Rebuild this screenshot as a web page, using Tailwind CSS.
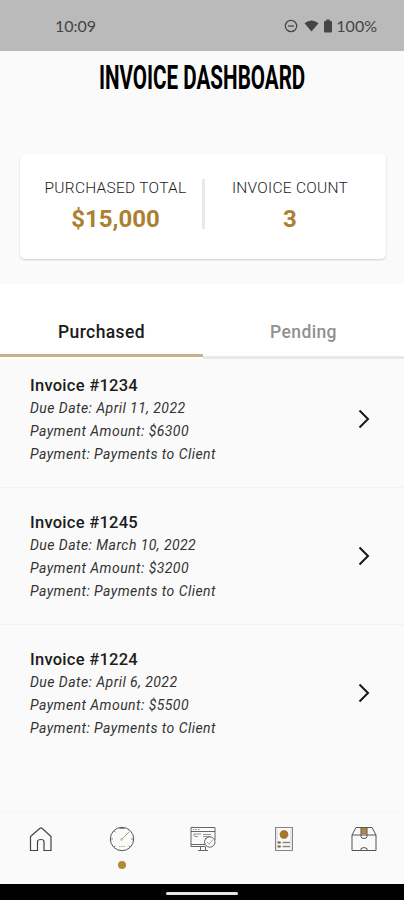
<!DOCTYPE html>
<html lang="en">
  <head>
    <meta charset="UTF-8" />
    <meta name="viewport" content="width=device-width, initial-scale=1.0" />
    <title>Invoice Dashboard</title>
    <script src="https://cdn.jsdelivr.net/npm/@tailwindcss/browser@4"></script>
  </head>
  <body class="flex h-[900px] w-[404px] flex-col overflow-hidden bg-[#fafafa] font-[Roboto,sans-serif] text-[#1c1c1c]">
    <!-- Status bar -->
    <div class="flex h-[51px] shrink-0 items-center bg-[#bababa] pr-[27px] pl-[55px] text-[#454545]">
      <span class="font-[Lato,sans-serif] text-[16px] leading-5">10:09</span>
      <svg class="ml-auto h-[14px] w-[14px]" viewBox="0 0 14 14" fill="none" stroke="currentColor" stroke-width="1.2">
        <circle cx="7" cy="7" r="5.7" />
        <path d="M4 7h6" />
      </svg>
      <svg class="ml-[6px] h-[12px] w-[15px]" viewBox="0 0 15 12" fill="currentColor">
        <path d="M0.5 3.2Q7.5-2 14.5 3.2L7.5 11.6Z" />
      </svg>
      <svg class="ml-[5px] h-[14px] w-[8px]" viewBox="0 0 8 14" fill="currentColor">
        <path d="M2.3 0.5h3.4v1.5H7a1 1 0 0 1 1 1V12.5a1 1 0 0 1-1 1H1a1 1 0 0 1-1-1V3a1 1 0 0 1 1-1h1.3z" />
      </svg>
      <span class="ml-[4px] font-[Lato,sans-serif] text-[16px] leading-5">100%</span>
    </div>

    <!-- Title and totals -->
    <header class="h-[233px] shrink-0 px-5 pt-[8px]">
      <h1 class="flex h-[36px] justify-center">
        <span class="shrink-0 scale-x-[0.625] text-[33px] leading-[37px] font-bold whitespace-nowrap text-black">INVOICE DASHBOARD</span>
      </h1>
      <div class="mt-[59px] flex h-[105px] w-[366px] rounded-[5px] bg-white pt-[25px] shadow-[0_1px_2px_rgba(0,0,0,0.18)]">
        <div class="flex w-[182px] flex-col items-center pl-[9px]">
          <span class="text-[15.5px] leading-[18px] font-light tracking-[0.27px] whitespace-nowrap">PURCHASED TOTAL</span>
          <span class="mt-[8px] text-[24px] leading-[28px] font-bold text-[#ac7f31]">$15,000</span>
        </div>
        <div class="h-[50px] w-[3px] bg-[#e9e9e9]"></div>
        <div class="flex flex-1 flex-col items-center pr-[11px]">
          <span class="text-[15.5px] leading-[18px] font-light tracking-[0.27px] whitespace-nowrap">INVOICE COUNT</span>
          <span class="mt-[8px] text-[24px] leading-[28px] font-bold text-[#ac7f31]">3</span>
        </div>
      </div>
    </header>

    <!-- Tabs -->
    <nav class="flex h-[75px] shrink-0 bg-white text-center text-[17.5px] leading-5 font-medium tracking-[0.38px]">
      <div class="h-[73px] w-[203px] border-b-3 border-[#cbb08a] pt-[38px]">Purchased</div>
      <div class="flex-1 border-b-3 border-[#e8e8e8] pt-[38px] text-[#909090]">Pending</div>
    </nav>

    <!-- Invoices -->
    <main class="h-[453px] shrink-0">
      <div class="flex h-[129px] justify-between border-b border-[#f2f2f2] pr-[34px] pl-[30px]">
        <div class="pt-[16px] text-[14px] leading-[23px] tracking-[0.45px] text-[#333] italic">
          <h2 class="text-[16.5px] leading-[22px] font-medium tracking-[0.27px] text-[#1c1c1c] not-italic">Invoice #1234</h2>
          <p>Due Date: April 11, 2022</p>
          <p>Payment Amount: $6300</p>
          <p>Payment: Payments to Client</p>
        </div>
        <svg class="mt-[50px] h-[20px] w-[12px]" viewBox="0 0 12 20" fill="none" stroke="#181818" stroke-width="2"><path d="M1.5 1.5L10 10L1.5 18.5" /></svg>
      </div>
      <div class="flex h-[137px] justify-between border-b border-[#f2f2f2] pr-[34px] pl-[30px]">
        <div class="pt-[24px] text-[14px] leading-[23px] tracking-[0.45px] text-[#333] italic">
          <h2 class="text-[16.5px] leading-[22px] font-medium tracking-[0.27px] text-[#1c1c1c] not-italic">Invoice #1245</h2>
          <p>Due Date: March 10, 2022</p>
          <p>Payment Amount: $3200</p>
          <p>Payment: Payments to Client</p>
        </div>
        <svg class="mt-[58px] h-[20px] w-[12px]" viewBox="0 0 12 20" fill="none" stroke="#181818" stroke-width="2"><path d="M1.5 1.5L10 10L1.5 18.5" /></svg>
      </div>
      <div class="flex h-[137px] justify-between pr-[34px] pl-[30px]">
        <div class="pt-[24px] text-[14px] leading-[23px] tracking-[0.45px] text-[#333] italic">
          <h2 class="text-[16.5px] leading-[22px] font-medium tracking-[0.27px] text-[#1c1c1c] not-italic">Invoice #1224</h2>
          <p>Due Date: April 6, 2022</p>
          <p>Payment Amount: $5500</p>
          <p>Payment: Payments to Client</p>
        </div>
        <svg class="mt-[58px] h-[20px] w-[12px]" viewBox="0 0 12 20" fill="none" stroke="#181818" stroke-width="2"><path d="M1.5 1.5L10 10L1.5 18.5" /></svg>
      </div>
    </main>

    <!-- Bottom navigation -->
    <footer class="grid h-[72px] shrink-0 grid-cols-5 justify-items-center border-t border-[#f6f6f6] pt-[13px] pl-px text-[#555]">
      <svg class="h-[26px] w-[26px]" viewBox="0 0 26 26" fill="none" stroke="#444" stroke-width="1.2">
        <path d="M2.5 10.5L12 2.2Q13 1.4 14 2.2L23 10.5V24.5H16V15.5Q16 13.5 13 13.5Q9.5 13.5 9.5 15.5V24.5H2.5Z" />
      </svg>
      <div class="flex flex-col items-center">
        <svg class="h-[26px] w-[26px]" viewBox="0 0 26 26" fill="none" stroke="currentColor" stroke-width="1">
          <circle cx="13" cy="13" r="11.7" />
          <path d="M10.5 2.5h5M2 13h2M22 13h2M5 5l1.3 1.3M5 21l1.3-1.3M21 21l-1.3-1.3" stroke-width="0.7" />
          <path d="M10 20.5h6" stroke="#999" stroke-width="0.8" stroke-dasharray="1.5 0.7" />
          <path d="M12.5 13.5L20 6" stroke="#b99a62" />
          <circle cx="12.5" cy="13.5" r="1" stroke="#b99a62" stroke-width="0.6" />
        </svg>
        <span class="mt-[9px] h-2 w-2 rounded-full bg-[#b88933]"></span>
      </div>
      <svg class="ml-px h-[26px] w-[26px]" viewBox="0 0 26 26" fill="none" stroke="currentColor" stroke-width="0.9">
        <path d="M15.5 20.5H1V1.5H25V14M1 5.5H25M1 18.5H15" />
        <path d="M3 3.5h1.5M5.5 3.5h1.5M8 3.5h1.5M4 10V8H11M4.5 10.5H8M13 8.5h8M13 10.5h7M15 12.5h2" stroke="#777" stroke-width="0.8" />
        <path d="M10.5 21v3M15.5 21v3M8 24.5h10" />
        <circle cx="19.8" cy="16" r="5.2" />
        <path d="M17 16l2 2.2l3.6-4.2" stroke="#b99a62" />
      </svg>
      <svg class="ml-px h-[26px] w-[26px]" viewBox="0 0 26 26" fill="none" stroke="currentColor" stroke-width="0.9">
        <rect x="4.5" y="1.5" width="17" height="23" stroke="#777" />
        <path d="M6 3v20M20 3v20" stroke="#bbb" stroke-width="0.6" />
        <circle cx="13" cy="8.5" r="4" fill="#a87828" stroke="#806030" stroke-width="0.8" stroke-dasharray="2 1" />
        <path d="M6.7 16.5h3M6.7 20.5h3" stroke="#6b6040" stroke-width="2.2" />
        <path d="M11.5 16.5h7.5M11.5 20.5h7.5" stroke="#888" stroke-width="1.3" />
      </svg>
      <svg class="ml-px h-[26px] w-[26px]" viewBox="0 0 26 26" fill="none" stroke="currentColor" stroke-width="1">
        <path d="M1 9L5 1.5H21L25 9V24.5H1ZM1 9H25" />
        <path d="M10.5 2h5v6h-5z" fill="#b58743" stroke="#9a7030" stroke-width="0.6" />
        <path d="M10 2v8.5q0 2 3 2t3-2V2M10 24v-1.5q3-2 6 0V24" />
      </svg>
    </footer>

    <!-- System gesture bar -->
    <div class="flex h-[16px] shrink-0 justify-center bg-black pt-[8px]">
      <div class="h-[3px] w-[72px] rounded-full bg-[#e4e4e4]"></div>
    </div>
  </body>
</html>
